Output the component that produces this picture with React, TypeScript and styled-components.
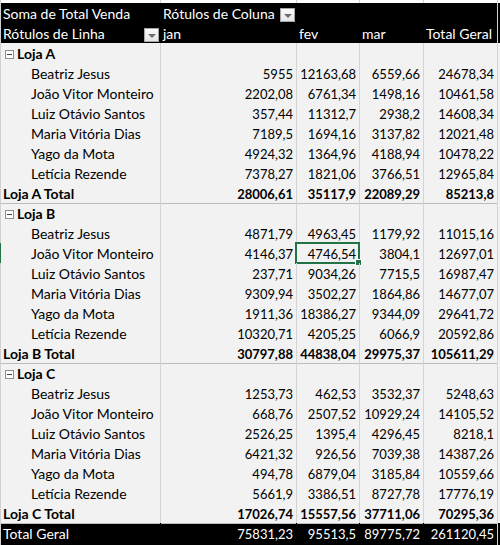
import React from "react";
import styled, { createGlobalStyle, css } from "styled-components";

const GlobalStyle = createGlobalStyle`
  html, body { margin: 0; padding: 0; background: #ffffff; }
  body { font-family: Lato, "Liberation Sans", Arial, sans-serif; font-size: 14px; color: #000; }
`;

const COLS = "1px 160px 136px 63px 64px 74px";

const Sheet = styled.div`
  width: 500px;
  height: 545px;
  overflow: hidden;
  background: #ffffff;
  display: flex;
  flex-direction: column;
`;

type Variant = "strip" | "header" | "group" | "item" | "total" | "grand";

const Row = styled.div<{ $variant: Variant; $end?: boolean }>`
  display: grid;
  grid-template-columns: ${COLS};
  height: ${(p) => (p.$variant === "strip" ? "3px" : p.$variant === "grand" ? "22px" : "20px")};
  flex: none;
  font-weight: ${(p) => (p.$variant === "total" || p.$variant === "group" ? 700 : 400)};
  color: ${(p) => (p.$variant === "header" || p.$variant === "grand" ? "#ffffff" : "#000000")};
  background: ${(p) =>
    p.$variant === "header" || p.$variant === "grand" ? "#000000" : p.$variant === "strip" ? "#ffffff" : "#f2f2f2"};
  ${(p) =>
    p.$end &&
    css`
      & > div {
        border-bottom: 1px solid #bdbdbd;
      }
    `}
`;

const Gutter = styled.div<{ $active?: boolean }>`
  background: ${(p) => (p.$active ? "#217346" : "#d0d0d0")};
`;

const Cell = styled.div<{ $num?: boolean; $indent?: number; $dark?: boolean; $line?: boolean }>`
  position: relative;
  box-sizing: border-box;
  display: flex;
  align-items: flex-start;
  justify-content: ${(p) => (p.$num ? "flex-end" : "flex-start")};
  padding: 2px ${(p) => (p.$num ? "3px" : "2px")} 0 ${(p) => p.$indent ?? 2}px;
  border-right: 1px solid ${(p) => (p.$dark ? (p.$line ? "#d4d4d4" : "#000000") : "#d4d4d4")};
  white-space: nowrap;
  overflow: visible;
  line-height: 18px;
  font-size: ${(p) => (p.$num ? "13px" : "14px")};
`;

const FilterButton = styled.span`
  position: absolute;
  right: 1px;
  bottom: 1px;
  width: 15px;
  height: 14px;
  box-sizing: border-box;
  border: 1px solid #a6a6a6;
  background: linear-gradient(#fafafa, #e6e6e6);
  display: flex;
  align-items: center;
  justify-content: center;
  &::after {
    content: "";
    border-left: 4px solid transparent;
    border-right: 4px solid transparent;
    border-top: 4px solid #6d6d6d;
    margin-top: 1px;
  }
`;

const Collapse = styled.span`
  width: 9px;
  height: 9px;
  box-sizing: border-box;
  border: 1px solid #8c8c8c;
  background: #ffffff;
  margin: 5px 3px 0 0;
  display: inline-flex;
  align-items: center;
  justify-content: center;
  &::after {
    content: "";
    width: 5px;
    height: 1px;
    background: #404040;
  }
`;

const Selection = styled.span`
  position: absolute;
  left: -2px;
  top: -1px;
  right: -1px;
  bottom: -1px;
  border: 2px solid #217346;
  pointer-events: none;
  &::after {
    content: "";
    position: absolute;
    right: -4px;
    bottom: -4px;
    width: 5px;
    height: 5px;
    background: #217346;
    border: 1px solid #ffffff;
  }
`;

type Rec = { name: string; v: string[] };
type Store = { name: string; people: Rec[]; total: string[] };

const stores: Store[] = [
  {
    name: "Loja A",
    people: [
      { name: "Beatriz Jesus", v: ["5955", "12163,68", "6559,66", "24678,34"] },
      { name: "João Vitor Monteiro", v: ["2202,08", "6761,34", "1498,16", "10461,58"] },
      { name: "Luiz Otávio Santos", v: ["357,44", "11312,7", "2938,2", "14608,34"] },
      { name: "Maria Vitória Dias", v: ["7189,5", "1694,16", "3137,82", "12021,48"] },
      { name: "Yago da Mota", v: ["4924,32", "1364,96", "4188,94", "10478,22"] },
      { name: "Letícia Rezende", v: ["7378,27", "1821,06", "3766,51", "12965,84"] },
    ],
    total: ["28006,61", "35117,9", "22089,29", "85213,8"],
  },
  {
    name: "Loja B",
    people: [
      { name: "Beatriz Jesus", v: ["4871,79", "4963,45", "1179,92", "11015,16"] },
      { name: "João Vitor Monteiro", v: ["4146,37", "4746,54", "3804,1", "12697,01"] },
      { name: "Luiz Otávio Santos", v: ["237,71", "9034,26", "7715,5", "16987,47"] },
      { name: "Maria Vitória Dias", v: ["9309,94", "3502,27", "1864,86", "14677,07"] },
      { name: "Yago da Mota", v: ["1911,36", "18386,27", "9344,09", "29641,72"] },
      { name: "Letícia Rezende", v: ["10320,71", "4205,25", "6066,9", "20592,86"] },
    ],
    total: ["30797,88", "44838,04", "29975,37", "105611,29"],
  },
  {
    name: "Loja C",
    people: [
      { name: "Beatriz Jesus", v: ["1253,73", "462,53", "3532,37", "5248,63"] },
      { name: "João Vitor Monteiro", v: ["668,76", "2507,52", "10929,24", "14105,52"] },
      { name: "Luiz Otávio Santos", v: ["2526,25", "1395,4", "4296,45", "8218,1"] },
      { name: "Maria Vitória Dias", v: ["6421,32", "926,56", "7039,38", "14387,26"] },
      { name: "Yago da Mota", v: ["494,78", "6879,04", "3185,84", "10559,66"] },
      { name: "Letícia Rezende", v: ["5661,9", "3386,51", "8727,78", "17776,19"] },
    ],
    total: ["17026,74", "15557,56", "37711,06", "70295,36"],
  },
];

const grand = ["75831,23", "95513,5", "89775,72", "261120,45"];

export default function App() {
  return (
    <>
      <GlobalStyle />
      <Sheet>
        <Row $variant="strip">
          <Gutter />
          <Cell />
          <Cell />
          <Cell />
          <Cell />
          <Cell />
        </Row>
        <Row $variant="header">
          <Gutter />
          <Cell $dark>Soma de Total Venda</Cell>
          <Cell $dark>
            Rótulos de Coluna
            <FilterButton />
          </Cell>
          <Cell $dark />
          <Cell $dark />
          <Cell $dark $line />
        </Row>
        <Row $variant="header">
          <Gutter />
          <Cell $dark>
            Rótulos de Linha
            <FilterButton />
          </Cell>
          <Cell $dark>jan</Cell>
          <Cell $dark>fev</Cell>
          <Cell $dark>mar</Cell>
          <Cell $dark $line>Total Geral</Cell>
        </Row>
        {stores.map((s, si) => (
          <React.Fragment key={s.name}>
            <Row $variant="group">
              <Gutter />
              <Cell $indent={4}>
                <Collapse />
                {s.name}
              </Cell>
              <Cell />
              <Cell />
              <Cell />
              <Cell />
            </Row>
            {s.people.map((p, pi) => {
              const selected = si === 1 && pi === 1;
              return (
                <Row $variant="item" key={p.name}>
                  <Gutter $active={selected} />
                  <Cell $indent={30}>{p.name}</Cell>
                  {p.v.map((n, i) => (
                    <Cell $num key={i}>
                      {n}
                      {selected && i === 1 && <Selection />}
                    </Cell>
                  ))}
                </Row>
              );
            })}
            <Row $variant="total" $end>
              <Gutter />
              <Cell>{s.name} Total</Cell>
              {s.total.map((n, i) => (
                <Cell $num key={i}>
                  {n}
                </Cell>
              ))}
            </Row>
          </React.Fragment>
        ))}
        <Row $variant="grand">
          <Gutter />
          <Cell $dark>Total Geral</Cell>
          {grand.map((n, i) => (
            <Cell $dark $line={i === 3} $num key={i}>
              {n}
            </Cell>
          ))}
        </Row>
      </Sheet>
    </>
  );
}
